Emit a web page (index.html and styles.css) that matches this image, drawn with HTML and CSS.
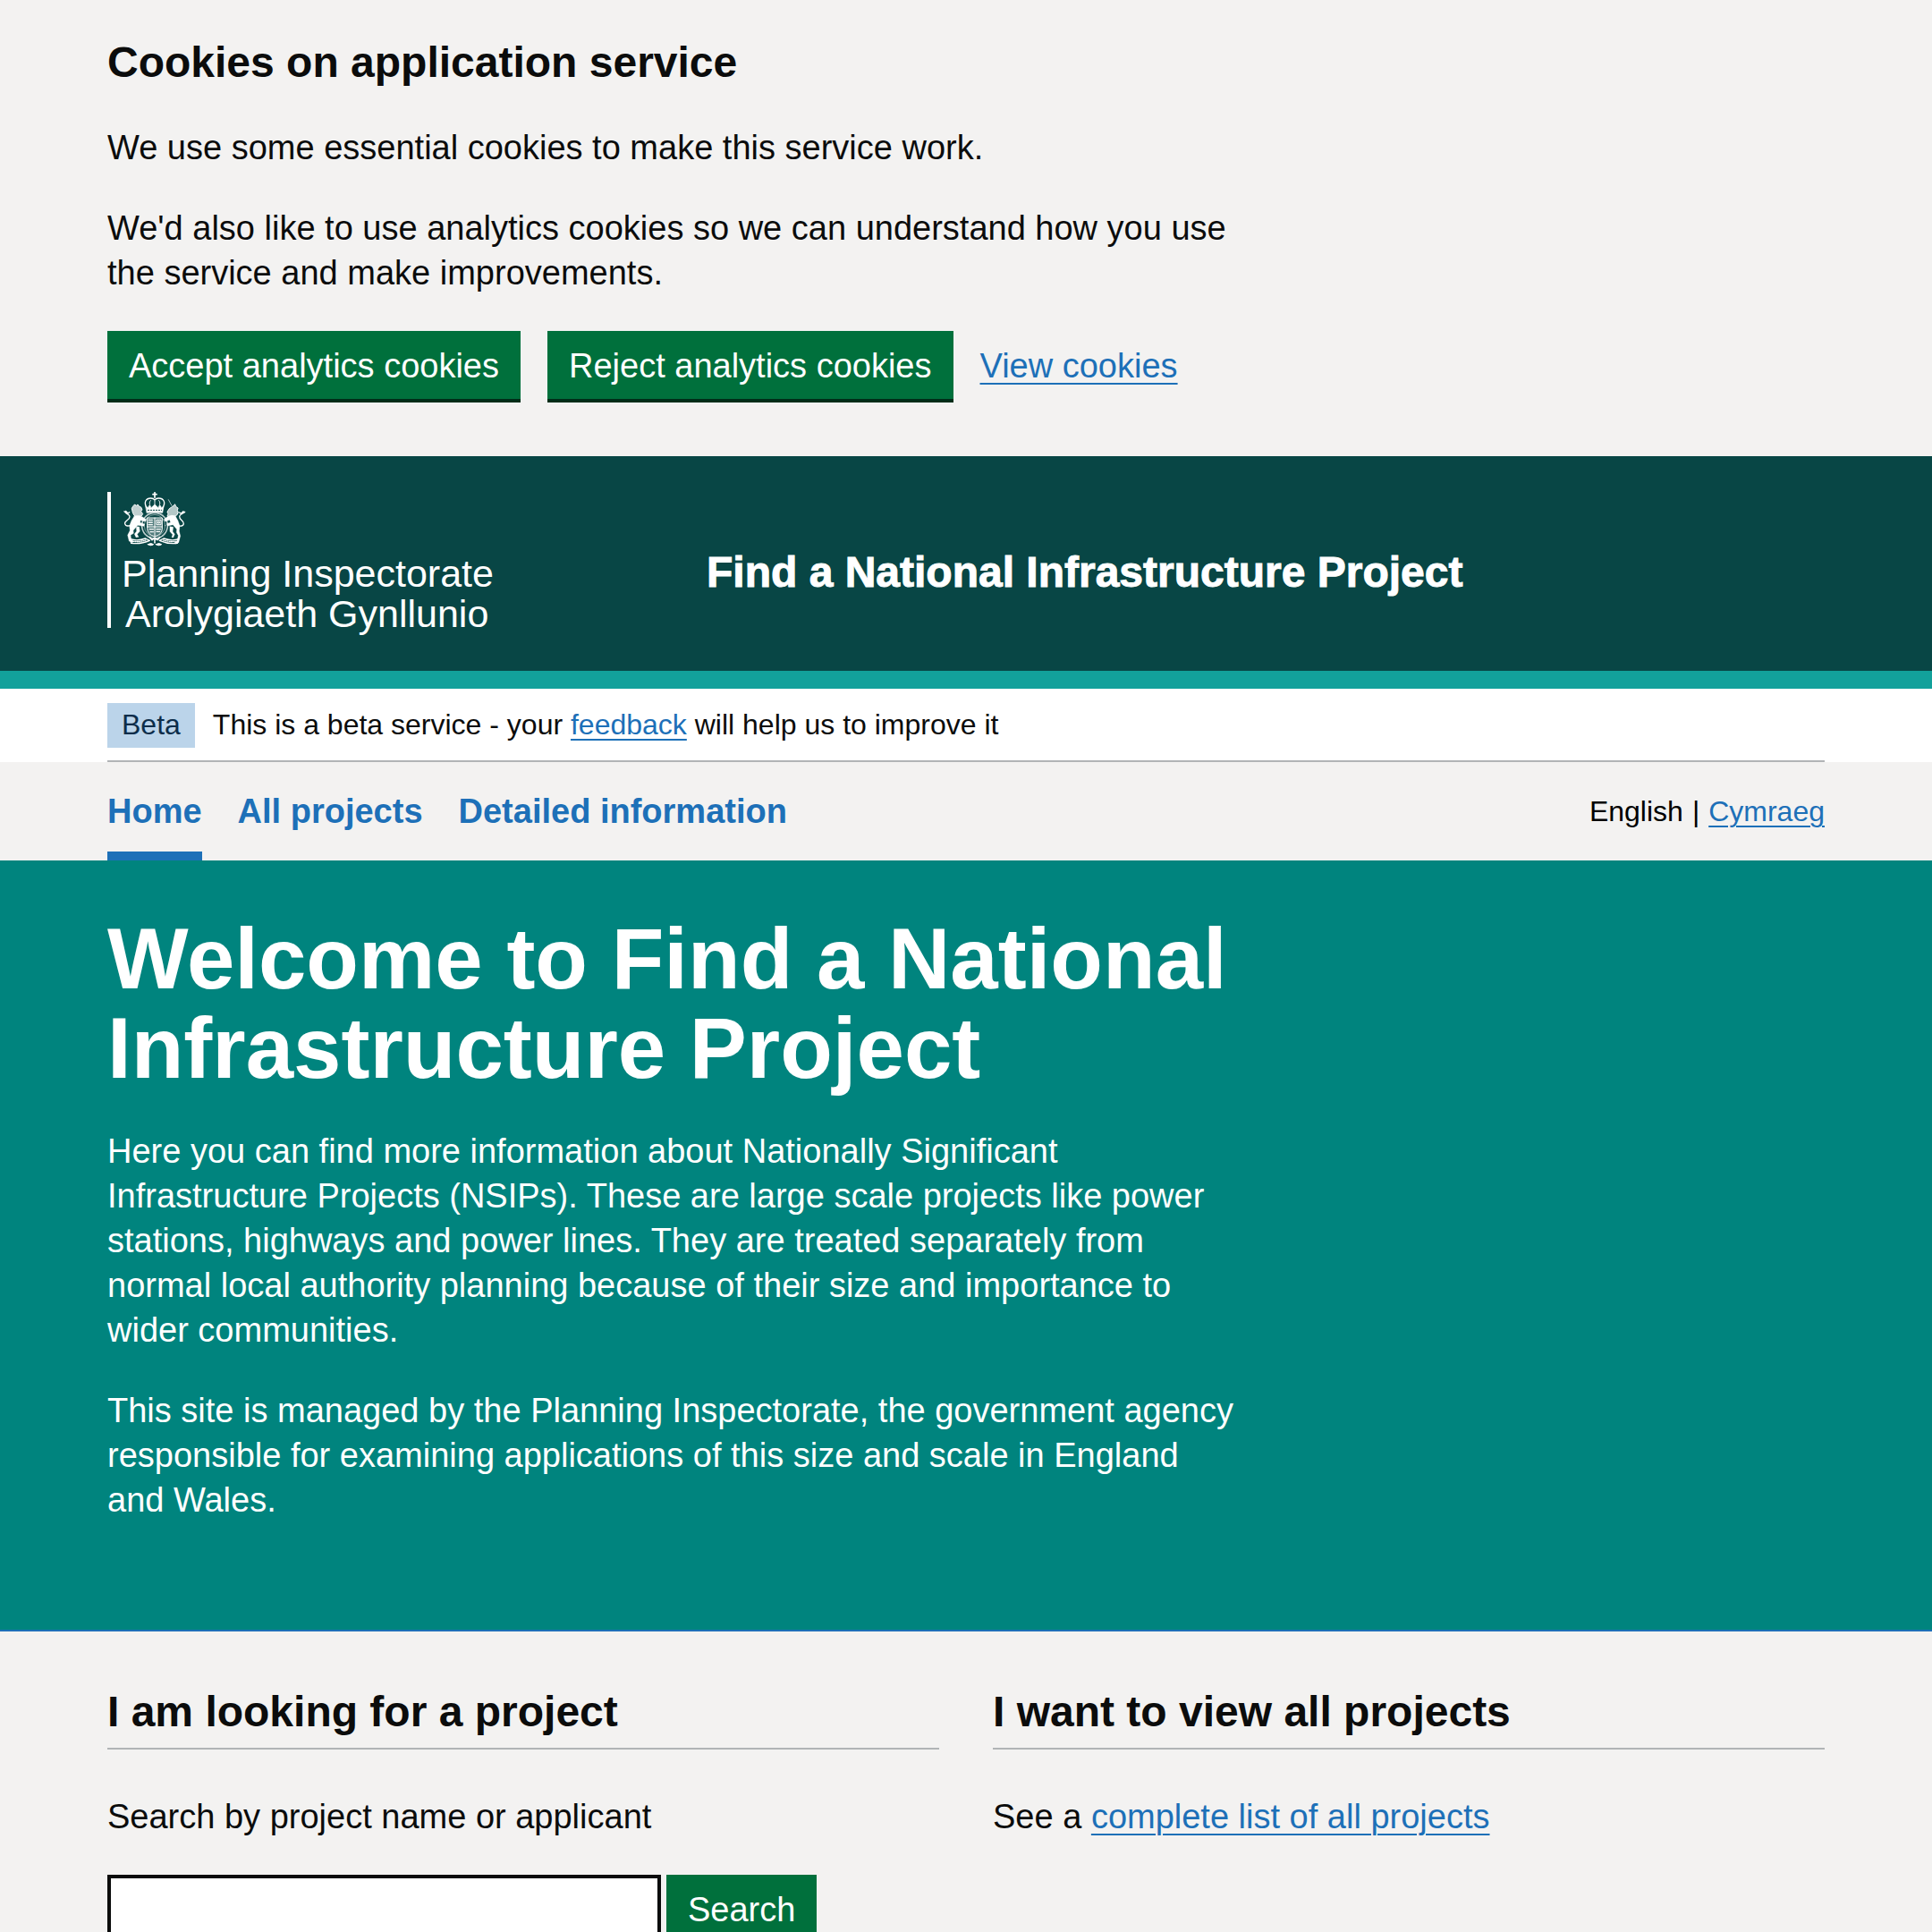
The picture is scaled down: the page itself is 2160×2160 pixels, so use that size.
FILE: index.html
```html
<!DOCTYPE html>
<html lang="en">
<head>
<meta charset="utf-8">
<meta name="viewport" content="width=device-width, initial-scale=1">
<title>Find a National Infrastructure Project</title>
<link rel="stylesheet" href="styles.css">
</head>
<body>
<section class="cookie-banner" aria-label="Cookies on application service">
  <div class="container">
    <h2 class="heading-m">Cookies on application service</h2>
    <div class="two-thirds">
      <p class="text">We use some essential cookies to make this service work.</p>
      <p class="text">We'd also like to use analytics cookies so we can understand how you use the service and make improvements.</p>
    </div>
    <div class="button-group">
      <button class="button" type="button">Accept analytics cookies</button>
      <button class="button" type="button">Reject analytics cookies</button>
      <a class="link" href="#cookies">View cookies</a>
    </div>
  </div>
</section>

<header class="header">
  <div class="container header-row">
    <svg class="logo" viewBox="0 0 440 160" role="img" aria-label="Planning Inspectorate">
      <rect x="0" y="0" width="4" height="152" fill="#fff"/>
      <svg x="18" y="0" width="70" height="62" viewBox="0 0 210 186" fill="none" stroke="#fff" stroke-linecap="round" stroke-linejoin="round">
        <!-- crown -->
        <path d="M105 2v17M99 8h12" stroke-width="5"/>
        <path d="M79 54C66 34 76 21 92 21q9 0 13 6 4-6 13-6c16 0 26 13 13 33" stroke-width="4"/>
        <path d="M105 25v25M91 29q-7 8 1 22M119 29q7 8-1 22" stroke-width="3" stroke-dasharray="3 3"/>
        <path d="M75 48l7 5 5-8 6 8 12-11 12 11 6-8 5 8 7-5-4 22q-26-5-52 0z" fill="#fff" stroke-width="2"/>
        <path d="M82 61h46" stroke="#084645" stroke-width="3" stroke-dasharray="4 5"/>
        <!-- shield inside the garter -->
        <ellipse cx="105" cy="113" rx="43" ry="43" stroke-width="5" stroke-dasharray="3 3" opacity=".75"/>
        <ellipse cx="105" cy="113" rx="35" ry="37" stroke-width="3" opacity=".5"/>
        <path d="M80 87h50v36q0 20-25 27-25-7-25-27z" fill="#fff" fill-opacity=".3" stroke-width="3"/>
        <path d="M105 87v63M80 117h50" stroke-width="3"/>
        <path d="M84 94h16M84 102h16M84 110h16M111 125h13M111 133h11M88 125h12M90 134h10" stroke-width="4" stroke-dasharray="5 3"/>
        <path d="M112 94h14v16h-14zM117 99h4v6h-4z" stroke-width="3"/>
        <!-- lion -->
        <path d="M38 42l5 4 5-4 4 6 7 3 4 9-4 5 6 9-5 7-12 1-12-3-5-10-3-13 3-7z" stroke-width="3" stroke-dasharray="4 2" fill="#fff" fill-opacity=".75"/>
        <path d="M36 82q13-6 27 1l13 9-2 7-17-4-1 8 15 5-2 7-21-3-15 17 1 10-10 6 2 14 8 7-3 4-12-5-5-20 8-16-2-15q5-18 16-32z" fill="#fff"/>
        <path d="M43 116l10 1 2 15-9 10 5 9-9 1-5-11 7-9z" fill="#fff"/>
        <path d="M22 113q-14 4-17-6c-3-11 16-12 16-24 0-9-12-7-14-15M8 64l7 8 5-4M7 69l-4-4" stroke-width="4"/>
        <!-- unicorn -->
        <path d="M162 46L151 26" stroke-width="2"/>
        <path d="M173 42l4 8 6 4-2 8 3 7-5 9-10 6-9-3-6 4-7-4 3-7-3-7 7-11 9-6z" fill="#fff" fill-opacity=".7" stroke-width="3" stroke-dasharray="4 2"/>
        <path d="M174 80q-14-5-28 4l-10 8 4 7 15-5 3 8-13 5 3 7 18-4 13 15-1 11 6 10-4 18-8 5 2 5 11-4 6-22-4-17 2-17q-4-18-15-34z" fill="#fff"/>
        <path d="M156 116l11 2-2 15 7 9-5 11-5-1 3-9-9-10z" fill="#fff"/>
        <path d="M187 114q14 2 15-8c1-10-15-12-14-24 1-8 11-7 14-14M201 65l-8 8-5-4M203 70l3-3" stroke-width="4"/>
        <!-- motto scroll -->
        <path d="M24 158q22 8 50-2l14 7q-29 13-62 9zM185 158q-22 8-50-2l-14 7q29 13 60 9z" stroke-width="4"/>
        <path d="M31 166q25 2 44-4M178 166q-25 2-44-4" stroke-width="4" stroke-dasharray="3 4"/>
        <path d="M88 152l8 9 9-7 9 7 8-9M105 158v12" stroke-width="5" stroke-dasharray="6 3"/>
        <path d="M82 176q10-7 19 0-8 7-19 0zM109 176q10-7 19 0-9 7-19 0z" fill="#fff" stroke-width="3"/>
      </svg>
      <text class="logo-text" x="16" y="106">Planning Inspectorate</text>
      <text class="logo-text" x="20" y="151">Arolygiaeth Gynllunio</text>
    </svg>
    <p class="header-title">Find a National Infrastructure Project</p>
  </div>
</header>

<div class="phase">
  <div class="container">
    <div class="phase-row">
      <strong class="tag">Beta</strong>
      <span class="phase-text">This is a beta service - your <a class="link link-small" href="#feedback">feedback</a> will help us to improve it</span>
    </div>
  </div>
</div>

<div class="nav-bar">
  <div class="container nav-row">
    <nav class="nav" aria-label="Main">
      <a class="nav-link nav-link-current" href="#home" aria-current="page">Home</a>
      <a class="nav-link" href="#projects">All projects</a>
      <a class="nav-link" href="#information">Detailed information</a>
    </nav>
    <div class="languages"><span>English</span><span>|</span><a class="link link-small" href="#cymraeg" lang="cy">Cymraeg</a></div>
  </div>
</div>

<main>
  <section class="hero">
    <div class="container">
      <div class="two-thirds">
        <h1 class="heading-xl">Welcome to Find a National Infrastructure Project</h1>
        <p class="text">Here you can find more information about Nationally Significant Infrastructure Projects (NSIPs). These are large scale projects like power stations, highways and power lines. They are treated separately from normal local authority planning because of their size and importance to wider communities.</p>
        <p class="text">This site is managed by the Planning Inspectorate, the government agency responsible for examining applications of this size and scale in England and Wales.</p>
      </div>
    </div>
  </section>

  <div class="container columns">
    <section>
      <h2 class="heading-rule">I am looking for a project</h2>
      <form>
        <label class="label" for="search">Search by project name or applicant</label>
        <div class="search-row">
          <input class="input" id="search" name="search" type="text">
          <button class="button" type="submit">Search</button>
        </div>
      </form>
    </section>
    <section>
      <h2 class="heading-rule">I want to view all projects</h2>
      <p class="text">See a <a class="link" href="#projects">complete list of all projects</a></p>
    </section>
  </div>
</main>
</body>
</html>
```

FILE: styles.css
```css
*,
*::before,
*::after {
  box-sizing: border-box;
}

body {
  margin: 0;
  background: #f3f2f1;
  color: #0b0c0c;
  font-family: "Liberation Sans", Arial, sans-serif;
  font-size: 38px;
  line-height: 50px;
}

.container {
  max-width: 1920px;
  margin: 0 120px;
}

@media (min-width: 2160px) {
  .container {
    margin: 0 auto;
  }
}

.two-thirds {
  max-width: 1260px;
}

.text {
  margin: 0 0 40px;
}

.heading-m {
  margin: 0 0 40px;
  font-size: 48px;
  line-height: 60px;
}

.heading-xl {
  margin: 0 0 40px;
  font-size: 96px;
  line-height: 100px;
}

.heading-rule {
  margin: 0 0 50px;
  padding-bottom: 10px;
  border-bottom: 2px solid #b1b4b6;
  font-size: 48px;
  line-height: 60px;
}

.link {
  color: #1d70b8;
  text-decoration: underline;
  text-decoration-thickness: 2px;
  text-underline-offset: 6px;
}

.link-small {
  text-underline-offset: 5px;
}

.button {
  padding: 16px 20px 14px;
  border: 4px solid transparent;
  border-radius: 0;
  background: #00703c;
  box-shadow: 0 4px 0 #002d18;
  color: #fff;
  font: inherit;
  line-height: 38px;
  white-space: nowrap;
}

/* Cookie banner */

.cookie-banner {
  padding: 40px 0 64px;
}

.button-group {
  display: flex;
  flex-wrap: wrap;
  align-items: baseline;
  gap: 30px;
}

/* Header */

.header {
  padding: 40px 0;
  border-bottom: 20px solid #12a19b;
  background: #084645;
  color: #fff;
}

.header-row {
  display: grid;
  grid-template-columns: 670px 1fr;
}

.logo {
  display: block;
  width: 440px;
  height: 160px;
  overflow: visible;
}

.logo-text {
  fill: #fff;
  font-size: 43px;
}

.header-title {
  margin: 0;
  padding-top: 60px;
  font-size: 48px;
  font-weight: bold;
  line-height: 60px;
  -webkit-text-stroke: 1px currentColor;
}

/* Phase banner */

.phase {
  background: #fff;
  font-size: 32px;
  line-height: 40px;
}

.phase-row {
  display: flex;
  align-items: flex-start;
  gap: 20px;
  padding: 16px 0 14px;
  border-bottom: 2px solid #b1b4b6;
}

.tag {
  padding: 4px 16px 6px;
  background: #bbd4ea;
  color: #0c2d4a;
  font-weight: normal;
}

.phase-text {
  padding-top: 4px;
}

/* Navigation */

.nav-row {
  display: flex;
  align-items: center;
  justify-content: space-between;
}

.nav {
  display: flex;
  gap: 40px;
}

.nav-link {
  padding: 30px 0 20px;
  border-bottom: 10px solid transparent;
  color: #1d70b8;
  font-weight: bold;
  text-decoration: none;
}

.nav-link-current {
  border-bottom-color: #1d70b8;
}

.languages {
  display: flex;
  gap: 10px;
  color: #000;
  font-size: 32px;
  line-height: 40px;
}

/* Home page */

.hero {
  padding: 60px 0 80px;
  border-bottom: 2px solid #1d70b8;
  background: #00847e;
  color: #fff;
}

.columns {
  display: grid;
  grid-template-columns: 1fr 1fr;
  gap: 60px;
  padding-top: 60px;
}

.label {
  display: block;
  margin-bottom: 40px;
}

.search-row {
  display: flex;
  align-items: flex-start;
  gap: 6px;
}

.input {
  width: calc(100% * 2 / 3 - 1px);
  height: 80px;
  padding: 10px;
  border: 4px solid #0b0c0c;
  border-radius: 0;
  background: #fff;
  font: inherit;
}
```
